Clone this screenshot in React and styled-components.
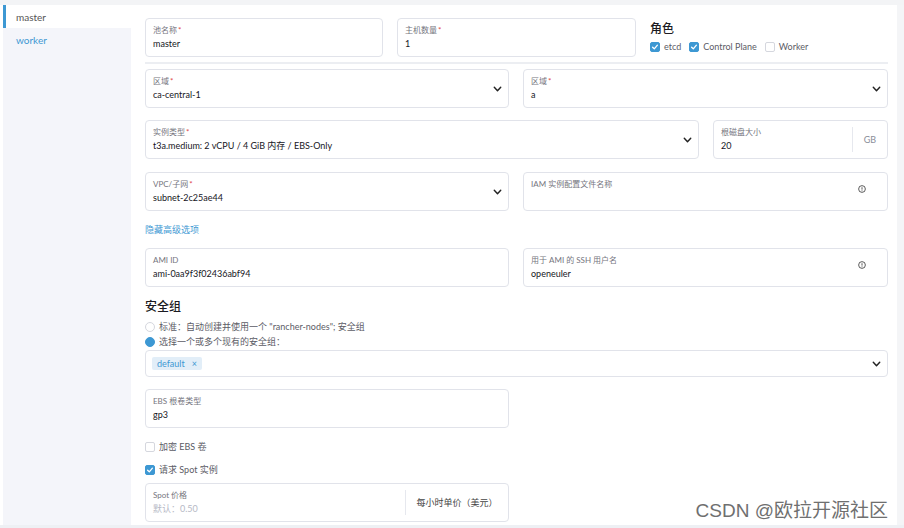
import React from 'react'
import styled, { createGlobalStyle } from 'styled-components'

const Global = createGlobalStyle`
  html, body { margin: 0; padding: 0; background: #fff; }
  body { font-family: Lato, "Noto Sans CJK SC", sans-serif; }
  * { box-sizing: border-box; }
`

const BLUE = '#3d98d3'

const Page = styled.div`
  width: 904px;
  height: 528px;
  display: flex;
  flex-direction: column;
  background: #fff;
  position: relative;
  overflow: hidden;
`

const TopStrip = styled.div`
  height: 5px;
  background: #f3f4f6;
  flex-shrink: 0;
`

const Body = styled.div`
  flex: 1;
  display: flex;
  border-bottom: 3px solid #eef0f4;
`

const Sidebar = styled.div`
  width: 128px;
  margin-left: 3px;
  background: #f4f5fa;
  display: flex;
  flex-direction: column;
  flex-shrink: 0;
`

const Tab = styled.div`
  height: 23px;
  display: flex;
  align-items: center;
  padding-left: ${p => (p.$active ? '10px' : '13px')};
  font-size: 10px;
  color: ${p => (p.$active ? '#555' : BLUE)};
  background: ${p => (p.$active ? '#fff' : 'transparent')};
  border-left: ${p => (p.$active ? `3px solid ${BLUE}` : 'none')};
`

const Main = styled.div`
  flex: 1;
  background: #fff;
  padding: 13px 0 0 14px;
  border-right: 7px solid #f4f5f7;
  display: flex;
  flex-direction: column;
`

const Row = styled.div`
  display: flex;
  gap: 14px;
  margin-top: ${p => p.$mt || 0}px;
`

const Field = styled.div`
  position: relative;
  width: ${p => p.$w}px;
  height: ${p => p.$h || 39}px;
  border: 1px solid #e1e3ea;
  border-radius: 4px;
  padding: 5px 7px 0;
  display: flex;
  flex-direction: column;
  flex-shrink: 0;
`

const Label = styled.div`
  font-size: 8px;
  line-height: 12px;
  color: #75757e;
`

const Req = styled.span`
  color: #e0464b;
  margin-left: 1px;
`

const Value = styled.div`
  font-size: 9px;
  line-height: 14px;
  margin-top: 1px;
  color: ${p => (p.$placeholder ? '#b6b9c6' : '#16161d')};
`

const Chevron = styled.svg`
  position: absolute;
  right: 5px;
  top: 50%;
  transform: translateY(-50%);
  width: 11px;
  height: 11px;
`

const InfoIcon = styled.svg`
  position: absolute;
  right: 21px;
  top: 12px;
  width: 8px;
  height: 8px;
`

const Suffix = styled.div`
  position: absolute;
  right: 0;
  top: 6px;
  bottom: 6px;
  width: ${p => p.$w}px;
  border-left: 1px solid #e6e8ee;
  display: flex;
  align-items: center;
  justify-content: center;
  font-size: 9px;
  color: ${p => p.$color || '#8a8d99'};
`

const RoleBox = styled.div`
  width: 239px;
  display: flex;
  flex-direction: column;
  padding-top: 3px;
`

const Heading = styled.div`
  font-size: 12px;
  line-height: 16px;
  color: #1b1b22;
  font-weight: 500;
  margin-top: ${p => p.$mt || 0}px;
`

const Checks = styled.div`
  display: flex;
  gap: 8px;
  margin-top: 4px;
`

const CheckItem = styled.label`
  display: flex;
  align-items: center;
  gap: 4px;
  font-size: 9px;
  color: #5c5c66;
  line-height: 12px;
  margin-top: ${p => p.$mt || 0}px;
`

const Box = styled.span`
  width: 10px;
  height: 10px;
  border-radius: 2px;
  background: ${p => (p.$on ? BLUE : '#fff')};
  border: 1px solid ${p => (p.$on ? BLUE : '#d5d7de')};
  display: inline-flex;
  align-items: center;
  justify-content: center;
`

const Dot = styled.span`
  width: 10px;
  height: 10px;
  border-radius: 50%;
  background: ${p => (p.$on ? BLUE : '#fff')};
  border: 1px solid ${p => (p.$on ? BLUE : '#d5d7de')};
`

const Divider = styled.div`
  height: 2px;
  width: 743px;
  background: #eceef2;
  margin-top: 5px;
`

const Link = styled.div`
  font-size: 9px;
  line-height: 12px;
  color: ${BLUE};
  margin-top: 13px;
`

const MultiSelect = styled.div`
  position: relative;
  width: 743px;
  height: 27px;
  border: 1px solid #e1e3ea;
  border-radius: 4px;
  margin-top: 2px;
  display: flex;
  align-items: center;
  padding-left: 6px;
`

const Tag = styled.span`
  background: #e2eef8;
  color: ${BLUE};
  font-size: 9px;
  line-height: 13px;
  padding: 0 5px;
  border-radius: 2px;
  display: inline-flex;
  gap: 7px;
  align-items: center;
`

const Watermark = styled.div`
  position: absolute;
  right: 16px;
  bottom: 6px;
  font-family: "Liberation Sans", "Noto Sans CJK SC", sans-serif;
  font-size: 19px;
  color: #6f6f6f;
  text-shadow: 0 0 2px #fff;
`

const ChevronIcon = () => (
  <Chevron viewBox="0 0 12 12">
    <path d="M2.5 4.2 L6 7.8 L9.5 4.2" fill="none" stroke="#222" strokeWidth="1.6" strokeLinecap="round" strokeLinejoin="round" />
  </Chevron>
)

const Info = () => (
  <InfoIcon viewBox="0 0 10 10">
    <circle cx="5" cy="5" r="4.2" fill="none" stroke="#333" strokeWidth="1" />
    <path d="M5 2.8 V5.8" stroke="#333" strokeWidth="1" />
    <circle cx="5" cy="7.2" r="0.6" fill="#333" />
  </InfoIcon>
)

const Tick = () => (
  <svg width="8" height="8" viewBox="0 0 8 8">
    <path d="M1.6 4.2 L3.3 5.8 L6.4 2.2" fill="none" stroke="#fff" strokeWidth="1.3" strokeLinecap="round" strokeLinejoin="round" />
  </svg>
)

function Check({ on, children, mt }) {
  return (
    <CheckItem $mt={mt}>
      <Box $on={on}>{on && <Tick />}</Box>
      {children}
    </CheckItem>
  )
}

function Input({ w, label, required, value, placeholder, select, info, suffix, suffixW, suffixColor }) {
  return (
    <Field $w={w}>
      <Label>
        {label}
        {required && <Req>*</Req>}
      </Label>
      <Value $placeholder={!!placeholder}>{value || placeholder || '\u00a0'}</Value>
      {select && <ChevronIcon />}
      {info && <Info />}
      {suffix && <Suffix $w={suffixW} $color={suffixColor}>{suffix}</Suffix>}
    </Field>
  )
}

export default function App() {
  return (
    <Page>
      <Global />
      <TopStrip />
      <Body>
        <Sidebar>
          <Tab $active>master</Tab>
          <Tab>worker</Tab>
        </Sidebar>
        <Main>
          <Row>
            <Input w={238} label="池名称" required value="master" />
            <Input w={239} label="主机数量" required value="1" />
            <RoleBox>
              <Heading>角色</Heading>
              <Checks>
                <Check on>etcd</Check>
                <Check on>Control Plane</Check>
                <Check>Worker</Check>
              </Checks>
            </RoleBox>
          </Row>
          <Divider />
          <Row $mt={5}>
            <Input w={364} label="区域" required value="ca-central-1" select />
            <Input w={365} label="区域" required value="a" select />
          </Row>
          <Row $mt={12}>
            <Input w={554} label="实例类型" required value="t3a.medium: 2 vCPU / 4 GiB 内存 / EBS-Only" select />
            <Input w={175} label="根磁盘大小" value="20" suffix="GB" suffixW={35} />
          </Row>
          <Row $mt={13}>
            <Input w={364} label="VPC/子网" required value="subnet-2c25ae44" select />
            <Input w={365} label="IAM 实例配置文件名称" info />
          </Row>
          <Link>隐藏高级选项</Link>
          <Row $mt={12}>
            <Input w={364} label="AMI ID" value="ami-0aa9f3f02436abf94" />
            <Input w={365} label="用于 AMI 的 SSH 用户名" value="openeuler" info />
          </Row>
          <Heading $mt={12}>安全组</Heading>
          <CheckItem $mt={6}>
            <Dot />
            标准：自动创建并使用一个 "rancher-nodes"; 安全组
          </CheckItem>
          <CheckItem $mt={3}>
            <Dot $on />
            选择一个或多个现有的安全组：
          </CheckItem>
          <MultiSelect>
            <Tag>
              default <span>×</span>
            </Tag>
            <ChevronIcon />
          </MultiSelect>
          <Row $mt={12}>
            <Input w={364} label="EBS 根卷类型" value="gp3" />
          </Row>
          <Check mt={13}>加密 EBS 卷</Check>
          <Check on mt={11}>请求 Spot 实例</Check>
          <Row $mt={7}>
            <Input w={364} label="Spot 价格" placeholder="默认：0.50" suffix="每小时单价（美元）" suffixW={103} suffixColor="#444" />
          </Row>
        </Main>
      </Body>
      <Watermark>CSDN @欧拉开源社区</Watermark>
    </Page>
  )
}
